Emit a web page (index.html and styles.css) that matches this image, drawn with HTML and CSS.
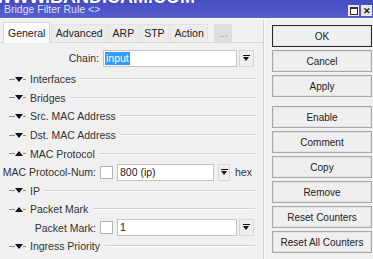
FILE: index.html
```html
<!DOCTYPE html>
<html>
<head>
    <title>Bridge Filter Rule</title>
    <link rel="stylesheet" href="styles.css">
</head>
<body>
    <div class="window">
        <div class="titlebar">
            <div class="watermark">WWW.BANDICAM.COM</div>
            <span class="title">Bridge Filter Rule &lt;&gt;</span>
            <div class="win-buttons">
                <span class="win-btn"><span class="max-box"></span></span>
                <span class="win-btn close">&#x2715;</span>
            </div>
        </div>

        <div class="main">
            <div class="left">
                <div class="tabs">
                    <div class="tab active">General</div>
                    <div class="tab">Advanced</div>
                    <div class="tab">ARP</div>
                    <div class="tab">STP</div>
                    <div class="tab">Action</div>
                    <div class="tab more">...</div>
                </div>

                <div class="panel">
                    <div class="field chain">
                        <label class="field-label">Chain:</label>
                        <div class="input wide"><span class="selected">input</span></div>
                        <span class="dropdown"><span class="dd-icon"></span></span>
                    </div>

                    <div class="section"><span class="dash"></span><span class="tri down"></span><span class="dash short"></span><span class="sec-label">Interfaces</span><span class="rule"></span></div>
                    <div class="section"><span class="dash"></span><span class="tri down"></span><span class="dash short"></span><span class="sec-label">Bridges</span><span class="rule"></span></div>
                    <div class="section"><span class="dash"></span><span class="tri down"></span><span class="dash short"></span><span class="sec-label">Src. MAC Address</span><span class="rule"></span></div>
                    <div class="section"><span class="dash"></span><span class="tri down"></span><span class="dash short"></span><span class="sec-label">Dst. MAC Address</span><span class="rule"></span></div>
                    <div class="section"><span class="dash"></span><span class="tri up"></span><span class="dash short"></span><span class="sec-label">MAC Protocol</span><span class="rule"></span></div>

                    <div class="field">
                        <label class="field-label">MAC Protocol-Num:</label>
                        <span class="check"></span>
                        <div class="input medium">800 (ip)</div>
                        <span class="dropdown small"><span class="dd-icon"></span></span>
                        <span class="unit">hex</span>
                    </div>

                    <div class="section"><span class="dash"></span><span class="tri down"></span><span class="dash short"></span><span class="sec-label">IP</span><span class="rule"></span></div>
                    <div class="section"><span class="dash"></span><span class="tri up"></span><span class="dash short"></span><span class="sec-label">Packet Mark</span><span class="rule"></span></div>

                    <div class="field">
                        <label class="field-label">Packet Mark:</label>
                        <span class="check"></span>
                        <div class="input long">1</div>
                        <span class="dropdown"><span class="dd-icon"></span></span>
                    </div>

                    <div class="section"><span class="dash"></span><span class="tri down"></span><span class="dash short"></span><span class="sec-label">Ingress Priority</span><span class="rule"></span></div>
                </div>
            </div>

            <div class="right">
                <button class="btn default">OK</button>
                <button class="btn">Cancel</button>
                <button class="btn">Apply</button>
                <button class="btn spaced">Enable</button>
                <button class="btn">Comment</button>
                <button class="btn">Copy</button>
                <button class="btn">Remove</button>
                <button class="btn">Reset Counters</button>
                <button class="btn">Reset All Counters</button>
            </div>
        </div>
    </div>
</body>
</html>
```

FILE: styles.css
```css
* {
    box-sizing: border-box;
    margin: 0;
    padding: 0;
}

body {
    width: 373px;
    height: 259px;
    overflow: hidden;
    background: #f0f0f0;
    font-family: "Liberation Sans", Arial, sans-serif;
    font-size: 10.5px;
    color: #333;
}

.window {
    width: 373px;
    height: 259px;
    display: flex;
    flex-direction: column;
}

/* Title bar */
.titlebar {
    position: relative;
    height: 19px;
    flex-shrink: 0;
    display: flex;
    align-items: flex-end;
    justify-content: space-between;
    padding: 0 1px 2px 4px;
    background: linear-gradient(#444cbf, #4f57c9 60%, #5a62d2);
    border-bottom: 1px solid #fafafa;
    overflow: hidden;
}

.watermark {
    position: absolute;
    left: -5px;
    top: -12px;
    font-size: 18px;
    font-weight: bold;
    color: #fff;
    line-height: 18px;
    text-shadow: 0 0 1px #2a2f80;
}

.title {
    color: #dde1fb;
    font-size: 10.5px;
    line-height: 12px;
    margin-bottom: 1px;
}

.win-buttons {
    display: flex;
    gap: 2px;
}

.win-btn {
    width: 11px;
    height: 11px;
    background: #e8e8ee;
    display: flex;
    align-items: center;
    justify-content: center;
    color: #222;
    font-size: 9px;
    font-weight: bold;
}

.max-box {
    width: 8px;
    height: 8px;
    border: 1px solid #333;
    border-top-width: 2px;
    background: #fff;
}

/* Main area */
.main {
    flex: 1;
    display: flex;
}

.left {
    width: 264px;
    border-right: 1px solid #d4d4d4;
    box-shadow: 1px 0 0 #fbfbfb;
    display: flex;
    flex-direction: column;
}

.tabs {
    display: flex;
    align-items: flex-end;
    padding: 4px 0 0 3px;
    height: 24px;
    border-bottom: 1px solid #d9d9d9;
}

.tab {
    height: 18px;
    line-height: 17px;
    padding: 0 3.5px;
    color: #222;
    background: #ececec;
    border: 1px solid #e2e2e2;
    border-bottom: none;
    margin-right: 1px;
}

.tab.active {
    height: 21px;
    line-height: 20px;
    background: #fbfbfb;
    border-color: #d6d6d6;
    padding: 0 4px;
    margin-bottom: -1px;
}

.tab.more {
    margin-left: 5px;
    width: 18px;
    padding: 0;
    text-align: center;
    color: #9a9a9a;
    background: #dedede;
    border-color: #dedede;
}

.panel {
    padding: 5px 8px 0 0;
}

/* Form fields */
.field {
    display: flex;
    align-items: center;
    height: 18.5px;
}

.field.chain {
    height: 20px;
    margin-bottom: 2px;
}

.field-label {
    width: 96px;
    text-align: right;
    color: #333;
    margin-right: 4px;
}

.chain .field-label {
    width: 99px;
}

.check {
    width: 13px;
    height: 13px;
    background: #fff;
    border: 1px solid #b5b5b5;
    margin-right: 4px;
}

.input {
    height: 17px;
    background: #fff;
    border: 1px solid #c4c4c4;
    padding: 0 2px;
    line-height: 15px;
    color: #222;
}

.input.wide {
    width: 134px;
    padding-left: 1px;
}

.input.medium {
    width: 97px;
}

.input.long {
    width: 120px;
}

.selected {
    display: inline-block;
    background: #3399ff;
    color: #fff;
    padding: 0 1px;
    line-height: 13px;
}

.dropdown {
    width: 15px;
    height: 17px;
    margin-left: 2px;
    background: #efefef;
    border: 1px solid #d6d6d6;
    display: flex;
    align-items: center;
    justify-content: center;
}

.dropdown.small {
    width: 12px;
    margin-left: 4px;
}

.dd-icon {
    width: 7px;
    height: 7px;
    border-top: 1px solid #111;
    position: relative;
}

.dd-icon::after {
    content: "";
    position: absolute;
    left: 0;
    top: 1px;
    border-left: 3.5px solid transparent;
    border-right: 3.5px solid transparent;
    border-top: 4px solid #111;
}

.unit {
    margin-left: 5px;
    color: #333;
}

/* Collapsible section headers */
.section {
    display: flex;
    align-items: center;
    height: 18.6px;
    padding-left: 9px;
}

.dash {
    width: 6px;
    height: 1px;
    background: #8a8a8a;
}

.dash.short {
    width: 3px;
    margin-right: 4px;
}

.tri {
    width: 0;
    height: 0;
    border-left: 4.5px solid transparent;
    border-right: 4.5px solid transparent;
}

.tri.down {
    border-top: 5px solid #111;
}

.tri.up {
    border-bottom: 5px solid #111;
}

.sec-label {
    color: #333;
    white-space: nowrap;
}

.rule {
    flex: 1;
    height: 2px;
    margin-left: 5px;
    border-top: 1px solid #cfcfcf;
    border-bottom: 1px solid #fbfbfb;
}

/* Right button column */
.right {
    display: flex;
    flex-direction: column;
    gap: 3px;
    padding: 6px 0 0 8px;
}

.btn {
    width: 100px;
    height: 22px;
    background: #efefef;
    border: 1px solid #a9a9a9;
    box-shadow: inset 0 0 0 1px #e2e2e2;
    font-family: "Liberation Sans", Arial, sans-serif;
    font-size: 10px;
    color: #222;
}

.btn.default {
    border-color: #2a2a2a;
}

.btn.spaced {
    margin-top: 6px;
}
```
